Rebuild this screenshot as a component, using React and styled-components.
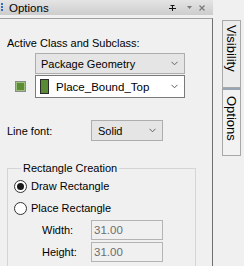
import React from "react";
import styled, { createGlobalStyle } from "styled-components";

const Global = createGlobalStyle`
  html, body { margin: 0; padding: 0; background: #f0f0f0; }
  body { font-family: "Liberation Sans", Arial, sans-serif; font-size: 11px; color: #000; }
  * { box-sizing: border-box; }
`;

const Root = styled.div`
  display: flex;
  width: 244px;
  height: 266px;
  overflow: hidden;
  background: #f0f0f0;
`;

const LeftColumn = styled.div`
  width: 213px;
  display: flex;
  flex-direction: column;
`;

const TitleBar = styled.div`
  height: 15px;
  display: flex;
  align-items: center;
  background: linear-gradient(#e4e4e4, #cdcdcd);
  padding-right: 8px;
`;

const Grip = styled.div`
  width: 2px;
  height: 9px;
  margin-left: 1px;
  background: repeating-linear-gradient(#2f6fc9 0 2px, transparent 2px 3px);
`;

const TitleText = styled.span`
  margin-left: 6px;
  font-size: 11.5px;
  flex: 1;
`;

const TitleButton = styled.span`
  display: flex;
  align-items: center;
  justify-content: center;
  margin-left: ${(p) => p.$gap || 0}px;
`;

const Panel = styled.div`
  flex: 1;
  margin-top: 3px;
  border-top: 1px solid #a0a0a0;
  border-right: 1px solid #6f6f6f;
  display: flex;
  flex-direction: column;
  padding-top: 17px;
`;

const Label = styled.div`
  padding-left: 7px;
  height: 14px;
  line-height: 14px;
  white-space: nowrap;
`;

const Row = styled.div`
  display: flex;
  align-items: center;
  margin-top: ${(p) => p.$mt || 0}px;
  padding-left: ${(p) => p.$pl || 0}px;
`;

const Select = styled.div`
  width: ${(p) => p.$w}px;
  height: ${(p) => p.$h}px;
  margin-left: ${(p) => p.$ml || 0}px;
  border: 1px solid ${(p) => (p.$white ? "#7a7a7a" : "#adadad")};
  background: ${(p) => (p.$white ? "#ffffff" : "#e5e5e5")};
  display: flex;
  align-items: center;
  padding-left: ${(p) => p.$pl || 5}px;
  padding-right: 6px;
  font-size: ${(p) => p.$fs || 11}px;
  white-space: nowrap;
`;

const SelectText = styled.span`
  flex: 1;
`;

const Swatch = styled.div`
  width: 11px;
  height: 11px;
  border: 1px solid #8c8c8c;
  background: #5d8c36;
  box-shadow: inset 0 0 0 1px #9cbf7c;
  margin-left: 15px;
`;

const ColorBar = styled.div`
  width: 9px;
  height: 15px;
  border: 1px solid #2b2b2b;
  background: #5b8a35;
  margin-right: 7px;
`;

const Chevron = () => (
  <svg width="7" height="5" viewBox="0 0 7 5">
    <path d="M0.5 0.8 L3.5 3.8 L6.5 0.8" fill="none" stroke="#606060" strokeWidth="1" />
  </svg>
);

const LineFontLabel = styled.span`
  width: 84px;
`;

const Group = styled.fieldset`
  margin: 20px 0 0 7px;
  width: 189px;
  border: 1px solid #d5d5d5;
  border-bottom: none;
  padding: 0 0 0 6px;
  flex: 1;
`;

const Legend = styled.legend`
  padding: 0 2px;
  margin-left: 7px;
  font-size: 11px;
  line-height: 14px;
`;

const RadioRow = styled.label`
  display: flex;
  align-items: center;
  height: 22px;
  gap: 4px;
`;

const RadioCircle = styled.span`
  width: 13px;
  height: 13px;
  border-radius: 50%;
  border: 1px solid #333;
  background: #fff;
  display: flex;
  align-items: center;
  justify-content: center;
  &::after {
    content: "";
    width: 7px;
    height: 7px;
    border-radius: 50%;
    background: ${(p) => (p.$checked ? "#1a1a1a" : "transparent")};
  }
`;

const FieldRow = styled.div`
  display: flex;
  align-items: center;
  margin-top: ${(p) => p.$mt || 0}px;
  padding-left: 28px;
`;

const FieldLabel = styled.span`
  width: 49px;
`;

const Input = styled.div`
  width: 72px;
  height: 20px;
  border: 1px solid #b4b4b4;
  background: #f0f0f0;
  color: #6d6d6d;
  padding-left: 2px;
  display: flex;
  align-items: center;
  font-size: 11.5px;
`;

const Strip = styled.div`
  padding: 20px 0 0 9px;
  display: flex;
  flex-direction: column;
`;

const Tab = styled.div`
  width: 19px;
  height: ${(p) => p.$h}px;
  border: 1px solid #a8a8a8;
  border-top: ${(p) => (p.$first ? "1px solid #a8a8a8" : "2px solid #98a3b3")};
  background: ${(p) => (p.$first ? "#ececec" : "#f2f2f2")};
  writing-mode: vertical-rl;
  display: flex;
  align-items: center;
  padding-top: ${(p) => p.$pt}px;
  font-size: 13px;
  line-height: 17px;
`;

export default function App() {
  return (
    <Root>
      <Global />
      <LeftColumn>
        <TitleBar>
          <Grip />
          <TitleText>Options</TitleText>
          <TitleButton>
            <svg width="7" height="6" viewBox="0 0 7 6">
              <path d="M0 3.5 H7 M3.5 0 V6 M1.5 0.5 H5.5" fill="none" stroke="#111" strokeWidth="1" />
            </svg>
          </TitleButton>
          <TitleButton $gap={11}>
            <svg width="5" height="3" viewBox="0 0 5 3">
              <path d="M0 0 H5 L2.5 3 Z" fill="#7a7a7a" />
            </svg>
          </TitleButton>
          <TitleButton $gap={7}>
            <svg width="6" height="6" viewBox="0 0 6 6">
              <path d="M0.5 0.5 L5.5 5.5 M5.5 0.5 L0.5 5.5" fill="none" stroke="#7a7a7a" strokeWidth="1.2" />
            </svg>
          </TitleButton>
        </TitleBar>
        <Panel>
          <Label>Active Class and Subclass:</Label>
          <Row $mt={3}>
            <Select $w={150} $h={21} $ml={35}>
              <SelectText>Package Geometry</SelectText>
              <Chevron />
            </Select>
          </Row>
          <Row $mt={1}>
            <Swatch />
            <Select $w={150} $h={23} $ml={9} $white $pl={4} $fs={11.5}>
              <ColorBar />
              <SelectText>Place_Bound_Top</SelectText>
              <Chevron />
            </Select>
          </Row>
          <Row $mt={22} $pl={7}>
            <LineFontLabel>Line font:</LineFontLabel>
            <Select $w={72} $h={21} $pl={6}>
              <SelectText>Solid</SelectText>
              <Chevron />
            </Select>
          </Row>
          <Group>
            <Legend>Rectangle Creation</Legend>
            <RadioRow>
              <RadioCircle $checked />
              Draw Rectangle
            </RadioRow>
            <RadioRow>
              <RadioCircle />
              Place Rectangle
            </RadioRow>
            <FieldRow $mt={1}>
              <FieldLabel>Width:</FieldLabel>
              <Input>31.00</Input>
            </FieldRow>
            <FieldRow $mt={2}>
              <FieldLabel>Height:</FieldLabel>
              <Input>31.00</Input>
            </FieldRow>
          </Group>
        </Panel>
      </LeftColumn>
      <Strip>
        <Tab $first $h={68} $pt={4}>Visibility</Tab>
        <Tab $h={68} $pt={6}>Options</Tab>
      </Strip>
    </Root>
  );
}
